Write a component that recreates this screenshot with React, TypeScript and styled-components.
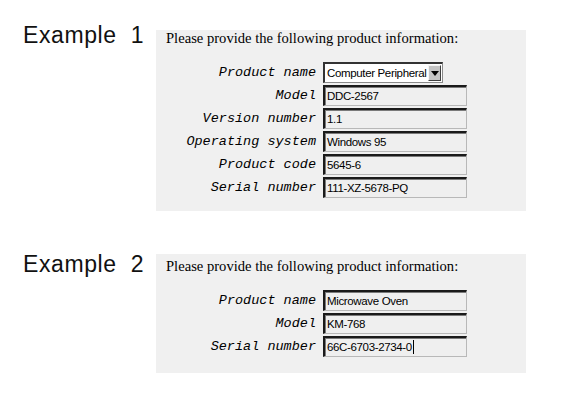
import React from "react";
import styled, { createGlobalStyle } from "styled-components";

const Global = createGlobalStyle`
  html, body { margin: 0; padding: 0; background: #ffffff; }
  body { font-family: "Liberation Sans", Arial, sans-serif; color: #000; }
`;

const Page = styled.div`
  display: flex;
  flex-direction: column;
  gap: 42px;
  padding: 24px 0 0 23px;
  width: 573px;
  height: 401px;
  box-sizing: border-box;
`;

const Section = styled.section`
  display: flex;
  align-items: flex-start;
`;

const Title = styled.h2<{ $offset: number }>`
  margin: 0;
  margin-top: ${(p) => p.$offset}px;
  width: 133px;
  flex: none;
  font-family: "Liberation Sans", Arial, sans-serif;
  font-weight: normal;
  font-size: 23px;
  line-height: 23px;
  letter-spacing: 0.6px;
  white-space: pre;
  color: #111;
`;

const Panel = styled.div<{ $top: number; $padTop: number; $padBottom: number }>`
  margin-top: ${(p) => p.$top}px;
  width: 370px;
  box-sizing: border-box;
  background: #f0f0f0;
  padding: ${(p) => p.$padTop}px 0 ${(p) => p.$padBottom}px 10px;
`;

const Heading = styled.p`
  margin: 0 0 16px 0;
  font-family: "Liberation Serif", "Times New Roman", serif;
  font-size: 14.6px;
  line-height: 16px;
  color: #000;
`;

const Form = styled.div`
  display: grid;
  grid-template-columns: 150px 144px;
  column-gap: 7px;
  row-gap: 2px;
  grid-auto-rows: 21px;
`;

const Label = styled.label`
  display: flex;
  align-items: center;
  justify-content: flex-end;
  font-family: "Liberation Mono", "Courier New", monospace;
  font-style: italic;
  font-size: 13.5px;
  white-space: nowrap;
  color: #000;
`;

const Field = styled.div`
  display: flex;
  align-items: center;
  box-sizing: border-box;
  height: 21px;
  padding-left: 2px;
  background: #efefef;
  border-style: solid;
  border-width: 2px 1px 1px 2px;
  border-color: #1a1a1a #b8b8b8 #b8b8b8 #1a1a1a;
  box-shadow: inset 1px 1px 0 #7a7a7a;
  font-family: "Liberation Sans", Arial, sans-serif;
  font-size: 11.5px;
  letter-spacing: -0.35px;
  white-space: nowrap;
  overflow: hidden;
`;

const Select = styled.div`
  display: flex;
  align-items: center;
  gap: 2px;
  box-sizing: border-box;
  width: fit-content;
  height: 21px;
  padding: 0 1px 0 2px;
  background: #ffffff;
  border-style: solid;
  border-width: 2px 1px 1px 2px;
  border-color: #333 #8a8a8a #8a8a8a #333;
  font-family: "Liberation Sans", Arial, sans-serif;
  font-size: 11.5px;
  letter-spacing: -0.35px;
  white-space: nowrap;
`;

const ArrowButton = styled.span`
  display: flex;
  align-items: center;
  justify-content: center;
  box-sizing: border-box;
  width: 13px;
  height: 16px;
  background: #c4c4c4;
  border-style: solid;
  border-width: 1px;
  border-color: #f4f4f4 #404040 #404040 #f4f4f4;
`;

const Caret = styled.span`
  display: inline-block;
  width: 1px;
  height: 14px;
  margin-left: 1px;
  background: #000;
`;

type Row = { label: string; value: string; kind?: "select"; caret?: boolean };

const example1: Row[] = [
  { label: "Product name", value: "Computer Peripheral", kind: "select" },
  { label: "Model", value: "DDC-2567" },
  { label: "Version number", value: "1.1" },
  { label: "Operating system", value: "Windows 95" },
  { label: "Product code", value: "5645-6" },
  { label: "Serial number", value: "111-XZ-5678-PQ" },
];

const example2: Row[] = [
  { label: "Product name", value: "Microwave Oven" },
  { label: "Model", value: "KM-768" },
  { label: "Serial number", value: "66C-6703-2734-0", caret: true },
];

function Rows({ rows }: { rows: Row[] }) {
  return (
    <Form>
      {rows.map((r) => (
        <React.Fragment key={r.label}>
          <Label>{r.label}</Label>
          {r.kind === "select" ? (
            <Select>
              <span>{r.value}</span>
              <ArrowButton>
                <svg width="8" height="5" viewBox="0 0 8 5">
                  <path d="M0 0 H8 L4 5 Z" fill="#000" />
                </svg>
              </ArrowButton>
            </Select>
          ) : (
            <Field>
              {r.value}
              {r.caret && <Caret />}
            </Field>
          )}
        </React.Fragment>
      ))}
    </Form>
  );
}

export default function App() {
  return (
    <>
      <Global />
      <Page>
        <Section>
          <Title $offset={0}>{"Example  1"}</Title>
          <Panel $top={6} $padTop={0} $padBottom={13}>
            <Heading>Please provide the following product information:</Heading>
            <Rows rows={example1} />
          </Panel>
        </Section>
        <Section>
          <Title $offset={0}>{"Example  2"}</Title>
          <Panel $top={1} $padTop={4} $padBottom={16}>
            <Heading>Please provide the following product information:</Heading>
            <Rows rows={example2} />
          </Panel>
        </Section>
      </Page>
    </>
  );
}
